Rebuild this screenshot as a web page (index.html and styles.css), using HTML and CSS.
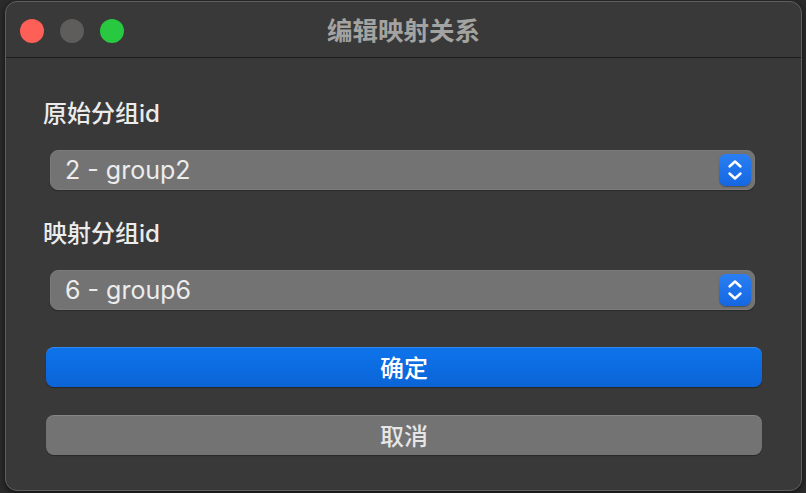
FILE: index.html
```html
<!DOCTYPE html>
<html lang="zh-CN">
<head>
<meta charset="utf-8">
<title>编辑映射关系</title>
<link rel="stylesheet" href="styles.css">
</head>
<body>
<div class="window">
  <div class="titlebar">
    <div class="lights">
      <span class="light close"></span>
      <span class="light mini"></span>
      <span class="light zoom"></span>
    </div>
    <div class="title">编辑映射关系</div>
  </div>
  <div class="content">
    <div class="label label-first">原始分组id</div>
    <div class="select">
      <span class="value">2 - group2</span>
      <span class="stepper">
        <svg width="16" height="22" viewBox="0 0 16 22"><path d="M2.5 7.5 L8 2.5 L13.5 7.5 M2.5 14.5 L8 19.5 L13.5 14.5" fill="none" stroke="#fff" stroke-width="2.4" stroke-linecap="round" stroke-linejoin="round"/></svg>
      </span>
    </div>
    <div class="label label-second">映射分组id</div>
    <div class="select">
      <span class="value">6 - group6</span>
      <span class="stepper">
        <svg width="16" height="22" viewBox="0 0 16 22"><path d="M2.5 7.5 L8 2.5 L13.5 7.5 M2.5 14.5 L8 19.5 L13.5 14.5" fill="none" stroke="#fff" stroke-width="2.4" stroke-linecap="round" stroke-linejoin="round"/></svg>
      </span>
    </div>
    <button class="btn btn-primary">确定</button>
    <button class="btn btn-secondary">取消</button>
  </div>
</div>
</body>
</html>
```
FILE: styles.css
```css
* { box-sizing: border-box; }
html, body { margin: 0; padding: 0; }
body {
  width: 806px;
  height: 493px;
  background: #2b2b2b;
  font-family: "Inter", "Noto Sans CJK SC", sans-serif;
  overflow: hidden;
  padding: 1px 0 0 5px;
}
.window {
  width: 797px;
  height: 490px;
  background: #393939;
  border: 1px solid #5f5f5f;
  border-radius: 12px;
  display: flex;
  flex-direction: column;
  box-shadow: 0 2px 6px rgba(0,0,0,0.6);
}
.titlebar {
  height: 56px;
  border-bottom: 1px solid #1c1c1c;
  display: flex;
  align-items: center;
  position: relative;
  flex-shrink: 0;
}
.lights {
  display: flex;
  gap: 16px;
  padding-left: 14px;
  padding-top: 2px;
}
.light {
  width: 24px;
  height: 24px;
  border-radius: 50%;
  display: block;
}
.close { background: #fe5f57; }
.mini { background: #5e5d5c; }
.zoom { background: #28c840; }
.title {
  position: absolute;
  left: 0;
  right: 0;
  top: 0;
  bottom: 0;
  display: flex;
  align-items: center;
  justify-content: center;
  font-size: 25.5px;
  font-weight: 700;
  color: #a3a3a1;
  font-family: "Noto Sans CJK SC", sans-serif;
  padding-bottom: 2px;
}
.content {
  display: flex;
  flex-direction: column;
  padding: 0 39px 0 40px;
}
.label {
  font-size: 24px;
  line-height: 30px;
  color: #ececec;
  margin-left: -3px;
  font-weight: 500;
}
.label-first { margin-top: 41px; }
.label-second { margin-top: 29px; }
.select {
  margin: 21px 7px 0 4px;
  height: 40px;
  background: #737373;
  border-radius: 8px;
  border: 1px solid #7b7b7b;
  box-shadow: 0 1px 1px rgba(0,0,0,0.25);
  display: flex;
  align-items: center;
  justify-content: space-between;
  padding: 0 3px 0 14px;
}
.value {
  font-size: 25px;
  color: #ececec;
  padding-bottom: 1px;
}
.stepper {
  width: 32px;
  height: 32px;
  border-radius: 7px;
  background: linear-gradient(#2a7ff4, #1467e0);
  display: flex;
  align-items: center;
  justify-content: center;
  box-shadow: 0 1px 1px rgba(0,0,0,0.3);
}
.btn {
  height: 40px;
  border-radius: 8px;
  font-family: "Noto Sans CJK SC", sans-serif;
  font-size: 24px;
  font-weight: 500;
  border: none;
  padding: 0 0 2px;
  display: block;
  width: 100%;
}
.btn-primary {
  margin-top: 37px;
  background: linear-gradient(#0e74ec, #0b64d6);
  color: #ffffff;
  box-shadow: 0 1px 1px rgba(0,0,0,0.35), inset 0 1px 0 rgba(255,255,255,0.15);
}
.btn-secondary {
  margin-top: 28px;
  background: #737373;
  color: #e6e6e6;
  box-shadow: 0 1px 1px rgba(0,0,0,0.3), inset 0 1px 0 rgba(255,255,255,0.12);
}
```
